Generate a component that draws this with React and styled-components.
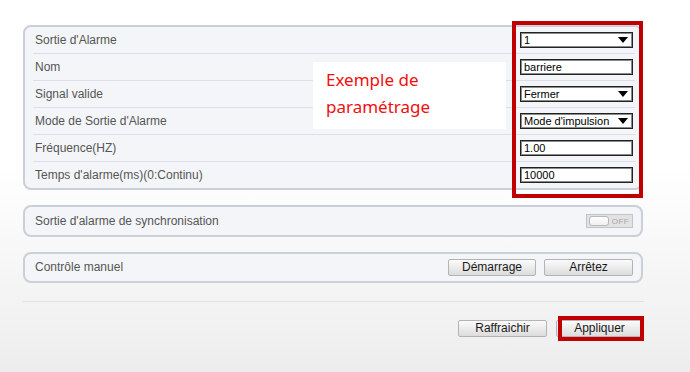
import styled, { createGlobalStyle } from "styled-components";

const GlobalStyle = createGlobalStyle`
  html, body {
    margin: 0;
    padding: 0;
  }
  body {
    width: 690px;
    height: 372px;
    overflow: hidden;
    font-family: "Liberation Sans", Arial, sans-serif;
    background: linear-gradient(to bottom, #ffffff 0%, #ffffff 45%, #ededed 100%);
  }
`;

const Page = styled.div`
  width: 620px;
  padding: 25px 0 0 23px;
  display: flex;
  flex-direction: column;
`;

const PanelWrap = styled.div`
  position: relative;
`;

const Panel = styled.div`
  box-sizing: border-box;
  border: 2px solid #cbcfd7;
  border-radius: 8px;
  background: #f4f5f9;
  margin-bottom: ${(p) => p.$mb || 0}px;
  height: ${(p) => (p.$h ? `${p.$h}px` : "auto")};
  display: flex;
  flex-direction: column;
  justify-content: center;
`;

const Row = styled.div`
  display: flex;
  align-items: center;
  justify-content: space-between;
  height: 26px;
  margin: 0 6px 0 8px;
  padding: 0 2px;
  border-top: 1px solid #dcdfe6;

  &:first-child {
    border-top: none;
  }
`;

const SingleRow = styled(Row)`
  height: 100%;
  border-top: none;
`;

const Label = styled.span`
  font-size: 12px;
  color: #555;
  margin-top: -1px;
`;

const Field = styled.div`
  box-sizing: border-box;
  width: 113px;
  height: 16px;
  border: 1px solid #222;
  box-shadow: inset 0 0 0 1px #8a8a8a;
  background: #fff;
  display: flex;
  align-items: center;
  justify-content: space-between;
  padding: 0 4px 0 3px;
  font-size: 11px;
  color: #000;
`;

const Arrow = styled.span`
  width: 0;
  height: 0;
  border-left: 5px solid transparent;
  border-right: 5px solid transparent;
  border-top: 6px solid #000;
`;

const Toggle = styled.div`
  box-sizing: border-box;
  width: 47px;
  height: 14px;
  border: 1px solid #c4c4c4;
  background: #e2e2e2;
  display: flex;
  align-items: center;
  padding: 0 0 0 2px;
`;

const Knob = styled.span`
  box-sizing: border-box;
  width: 20px;
  height: 10px;
  border: 1px solid #b8b8b8;
  border-radius: 3px;
  background: linear-gradient(#ffffff, #f0f0f0);
`;

const ToggleText = styled.span`
  flex: 1;
  text-align: center;
  font-size: 8px;
  color: #a8a8a8;
  letter-spacing: 0.5px;
`;

const Buttons = styled.div`
  display: flex;
  gap: ${(p) => p.$gap || 8}px;
`;

const Button = styled.button`
  box-sizing: border-box;
  width: ${(p) => p.$w || 88}px;
  height: 17px;
  padding: 0;
  border: 1px solid #b3b3b3;
  border-radius: 2px;
  background: linear-gradient(#fbfbfb, #dcdcdc);
  font-family: "Liberation Sans", Arial, sans-serif;
  font-size: 12px;
  color: #1a1a1a;
  line-height: 15px;
`;

const Divider = styled.div`
  height: 1px;
  background: #e2e2e2;
  margin: 18px 0 18px 0;
  width: 621px;
`;

const Footer = styled.div`
  display: flex;
  justify-content: flex-end;
  position: relative;
`;

const RedBox = styled.div`
  position: absolute;
  box-sizing: border-box;
  border: 4px solid #c00000;
  left: ${(p) => p.$l}px;
  top: ${(p) => p.$t}px;
  width: ${(p) => p.$w}px;
  height: ${(p) => p.$h}px;
  pointer-events: none;
`;

const Note = styled.div`
  position: absolute;
  left: 290px;
  top: 37px;
  width: 193px;
  height: 67px;
  box-sizing: border-box;
  background: #fff;
  padding: 4px 0 0 13px;
  font-family: "Noto Sans", "Open Sans", sans-serif;
  font-size: 17px;
  line-height: 27px;
  color: #f01010;
`;

const fields = [
  { label: "Sortie d'Alarme", value: "1", select: true },
  { label: "Nom", value: "barriere" },
  { label: "Signal valide", value: "Fermer", select: true },
  { label: "Mode de Sortie d'Alarme", value: "Mode d'impulsion", select: true },
  { label: "Fréquence(HZ)", value: "1.00" },
  { label: "Temps d'alarme(ms)(0:Continu)", value: "10000" },
];

export default function App() {
  return (
    <>
      <GlobalStyle />
      <Page>
        <PanelWrap>
          <Panel $mb={15}>
            {fields.map((f) => (
              <Row key={f.label}>
                <Label>{f.label}</Label>
                <Field>
                  <span>{f.value}</span>
                  {f.select && <Arrow />}
                </Field>
              </Row>
            ))}
          </Panel>
          <Note>
            Exemple de
            <br />
            paramétrage
          </Note>
          <RedBox $l={489} $t={-4} $w={131} $h={177} />
        </PanelWrap>

        <Panel $h={32} $mb={15}>
          <SingleRow>
            <Label>Sortie d'alarme de synchronisation</Label>
            <Toggle>
              <Knob />
              <ToggleText>OFF</ToggleText>
            </Toggle>
          </SingleRow>
        </Panel>

        <Panel $h={31}>
          <SingleRow>
            <Label>Contrôle manuel</Label>
            <Buttons>
              <Button $w={88}>Démarrage</Button>
              <Button $w={89}>Arrêtez</Button>
            </Buttons>
          </SingleRow>
        </Panel>

        <Divider />

        <Footer>
          <Buttons $gap={9}>
            <Button $w={89}>Raffraichir</Button>
            <Button $w={87}>Appliquer</Button>
          </Buttons>
          <RedBox $l={535} $t={-4} $w={86} $h={25} />
        </Footer>
      </Page>
    </>
  );
}
